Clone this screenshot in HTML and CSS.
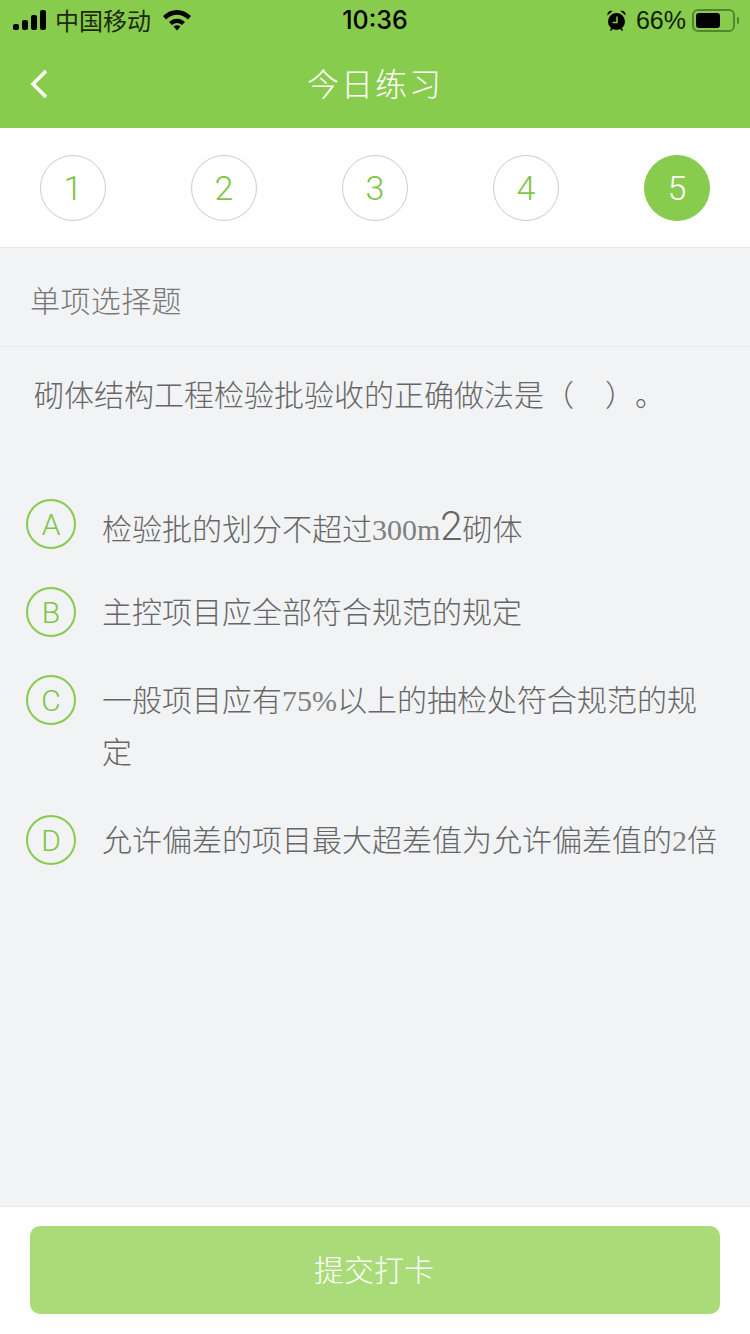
FILE: index.html
```html
<html>
<head>
    <title>今日练习</title>
    <link rel="stylesheet" href="styles.css">
</head>
<body>
    <div class="app">
        <div class="top">
            <div class="status">
                <div class="status-left">
                    <svg class="signal" width="34" height="20" viewBox="0 0 34 20">
                        <rect x="0" y="14" width="6" height="6" rx="2"/>
                        <rect x="9" y="10" width="6" height="10" rx="2"/>
                        <rect x="18" y="5" width="6" height="15" rx="2"/>
                        <rect x="27" y="0" width="6" height="20" rx="2"/>
                    </svg>
                    <span class="carrier">中国移动</span>
                    <svg class="wifi" width="30" height="22" viewBox="0 0 30 22">
                        <path d="M1 7 C9 -1 21 -1 29 7 L26 10.500 C19.500 4 10.500 4 4 10.500 Z"/>
                        <path d="M7 13 C11.500 8.500 18.500 8.500 23 13 L20 16 C17 13.200 13 13.200 10 16 Z"/>
                        <path d="M11.500 17.500 C13.500 15.800 16.500 15.800 18.500 17.500 L15 21.500 Z"/>
                    </svg>
                </div>
                <div class="clock">10:36</div>
                <div class="status-right">
                    <svg class="alarm" width="19" height="21" viewBox="0 0 19 21">
                        <circle cx="9.500" cy="11.500" r="8.500"/>
                        <path d="M0.500 5.500 C0 2.500 2.500 0 5.500 1 Z"/>
                        <path d="M18.500 5.500 C19 2.500 16.500 0 13.500 1 Z"/>
                        <path d="M3.500 20.500 L5.500 18 M15.500 20.500 L13.500 18" stroke="#000" stroke-width="1.500"/>
                        <path d="M10 6.500 V12.500 H5.500" fill="none" stroke="#88cc4d" stroke-width="1.500"/>
                    </svg>
                    <span class="battery-text">66%</span>
                    <div class="battery"><div class="battery-level"></div></div>
                    <div class="battery-cap"></div>
                </div>
            </div>
            <div class="nav">
                <svg class="back" width="20" height="32" viewBox="0 0 20 32">
                    <path d="M17 3 L4 16 L17 29" fill="none" stroke="#fff" stroke-width="3.500"/>
                </svg>
                <h1>今日练习</h1>
            </div>
        </div>

        <div class="steps">
            <div class="step">1</div>
            <div class="step">2</div>
            <div class="step">3</div>
            <div class="step">4</div>
            <div class="step active">5</div>
        </div>

        <div class="content">
            <div class="type">单项选择题</div>
            <div class="question">砌体结构工程检验批验收的正确做法是（<span class="blank"></span>）<span class="stop">。</span></div>
            <div class="options">
                <div class="option option-tall">
                    <div class="letter">A</div>
                    <div class="option-text">检验批的划分不超过<span class="serif">300m</span><span class="big">2</span>砌体</div>
                </div>
                <div class="option">
                    <div class="letter">B</div>
                    <div class="option-text">主控项目应全部符合规范的规定</div>
                </div>
                <div class="option">
                    <div class="letter">C</div>
                    <div class="option-text">一般项目应有<span class="serif">75%</span>以上的抽检处符合规范的规<br>定</div>
                </div>
                <div class="option">
                    <div class="letter">D</div>
                    <div class="option-text">允许偏差的项目最大超差值为允许偏差值的<span class="serif">2</span>倍</div>
                </div>
            </div>
        </div>

        <div class="footer">
            <button class="submit">提交打卡</button>
        </div>
    </div>
</body>
</html>
```

FILE: styles.css
```css
body {
    font-family: 'Liberation Sans', 'Noto Sans CJK SC', sans-serif;
    margin: 0;
    padding: 0;
    background-color: #f2f3f5;
}

.app {
    width: 750px;
    height: 1334px;
    display: flex;
    flex-direction: column;
    overflow: hidden;
}

.top {
    background-color: #88cc4d;
    height: 128px;
    flex-shrink: 0;
}

.status {
    height: 40px;
    display: flex;
    align-items: center;
    justify-content: space-between;
    padding: 0 11px 0 13px;
    color: #000;
    position: relative;
}

.status svg {
    fill: #000;
    display: block;
}

.status-left, .status-right {
    display: flex;
    align-items: center;
}

.carrier {
    font-size: 24px;
    margin-left: 8px;
    color: #1a2a10;
    padding-bottom: 2px;
}

.wifi {
    margin-left: 11px;
}

.clock {
    position: absolute;
    left: 0;
    right: 0;
    text-align: center;
    font-size: 25px;
    font-family: 'Inter', sans-serif;
    font-weight: 500;
}

.battery-text {
    font-size: 25px;
    margin-left: 10px;
    margin-right: 6px;
    color: #10200a;
}

.battery {
    width: 43px;
    height: 23px;
    border: 2px solid #55862f;
    border-radius: 6px;
    box-sizing: border-box;
    padding: 2px;
}

.battery-level {
    width: 24px;
    height: 15px;
    background-color: #000;
    border-radius: 3px;
}

.battery-cap {
    width: 2px;
    height: 7px;
    background-color: #55862f;
    margin-left: 2px;
    border-radius: 1px;
}

.nav {
    height: 88px;
    display: flex;
    align-items: center;
    justify-content: center;
    position: relative;
}

.back {
    position: absolute;
    left: 29px;
    top: 28px;
}

h1 {
    font-size: 32px;
    font-weight: 300;
    color: #fff;
    margin: 0 0 4px;
    letter-spacing: 2px;
}

.steps {
    background-color: #fff;
    height: 120px;
    padding: 27px 40px 0;
    box-sizing: border-box;
    display: flex;
    justify-content: space-between;
    align-items: flex-start;
    border-bottom: 1px solid #e6e7e9;
    flex-shrink: 0;
}

.step {
    width: 66px;
    height: 66px;
    border: 1px solid #ccc;
    border-radius: 50%;
    box-sizing: border-box;
    display: flex;
    align-items: center;
    justify-content: center;
    color: #7ec544;
    font-size: 34px;
    font-family: 'Roboto', sans-serif;
    font-weight: 300;
}

.step.active {
    background-color: #88cc4d;
    border-color: #88cc4d;
    color: #fff;
}

.content {
    flex: 1;
}

.type {
    height: 99px;
    padding: 4px 30px 0;
    display: flex;
    align-items: center;
    font-size: 30px;
    font-weight: 300;
    letter-spacing: 0.4px;
    color: #777;
    border-bottom: 1px solid #e6e7e9;
    box-sizing: border-box;
}

.question {
    padding: 27px 34px 0;
    font-size: 30px;
    font-weight: 300;
    line-height: 44px;
    color: #666;
}

.blank {
    display: inline-block;
    width: 31px;
}

.stop {
    margin-left: 15px;
}

.options {
    margin-top: 81px;
    padding: 0 26px;
}

.option {
    display: flex;
    align-items: flex-start;
    margin-bottom: 36px;
}

.letter {
    width: 50px;
    height: 50px;
    border: 2px solid #88cc4d;
    border-radius: 50%;
    box-sizing: border-box;
    display: flex;
    align-items: center;
    justify-content: center;
    color: #7ec544;
    font-size: 30px;
    font-family: 'Roboto', sans-serif;
    font-weight: 300;
    flex-shrink: 0;
}

.option-text {
    margin-left: 26px;
    font-size: 30px;
    font-weight: 300;
    line-height: 52px;
    color: #666;
}

.option-tall .option-text {
    padding-top: 5px;
    margin-bottom: -5px;
}

.serif {
    font-family: 'Liberation Serif', serif;
    color: #808080;
}

.big {
    font-family: 'Roboto', sans-serif;
    font-weight: 300;
    font-size: 40px;
    line-height: 30px;
}

.footer {
    background-color: #fff;
    height: 128px;
    padding: 19px 30px;
    box-sizing: border-box;
    border-top: 1px solid #e6e7e9;
    flex-shrink: 0;
}

.submit {
    width: 100%;
    height: 88px;
    padding: 0 2px 4px 0;
    background-color: #a9dc78;
    color: #fff;
    font-family: inherit;
    font-size: 30px;
    font-weight: 300;
    border: none;
    border-radius: 10px;
    cursor: pointer;
}
```
